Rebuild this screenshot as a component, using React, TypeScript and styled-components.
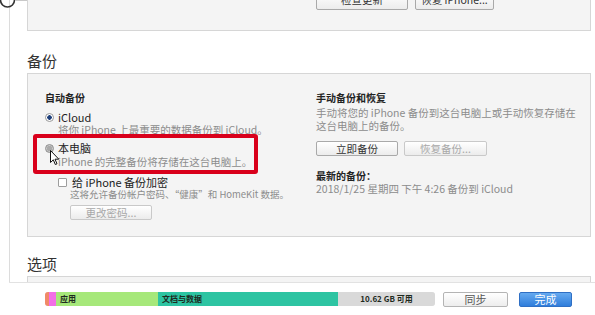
import React from "react";
import styled, { createGlobalStyle } from "styled-components";

const GlobalStyle = createGlobalStyle`
  html, body {
    margin: 0;
    padding: 0;
    background: #fff;
  }
  body {
    font-family: "Noto Sans CJK SC", "Noto Sans", sans-serif;
    color: #222;
  }
`;

const Screen = styled.div`
  position: relative;
  width: 595px;
  height: 315px;
  display: flex;
  flex-direction: column;
  overflow: hidden;
  background: #fff;
`;

const Scroll = styled.div`
  flex: 1;
  min-height: 0;
  overflow: hidden;
  margin-left: 9px;
  border-left: 1px solid #dcdcdc;
  padding: 0 4px 0 17px;
`;

const Panel = styled.div<{ $height: number }>`
  position: relative;
  box-sizing: border-box;
  height: ${(p) => p.$height}px;
  background: #f4f4f4;
  border: 1px solid #d6d6d6;
  padding: 0 0 0 17px;
  display: grid;
  grid-template-columns: 271px 1fr;
`;

const TopPanel = styled(Panel)`
  margin-top: -20px;
  align-items: end;
  padding-bottom: 20px;
`;

const Column = styled.div`
  display: flex;
  flex-direction: column;
  align-items: flex-start;
  padding-top: 17px;
`;

const ButtonRow = styled.div<{ $gap?: number }>`
  display: flex;
  gap: ${(p) => p.$gap ?? 6}px;
`;

const Button = styled.div<{ $width: number; $disabled?: boolean; $height?: number }>`
  box-sizing: border-box;
  width: ${(p) => p.$width}px;
  height: ${(p) => p.$height ?? 15}px;
  border: 1px solid ${(p) => (p.$disabled ? "#c9c9c9" : "#a9a9a9")};
  border-radius: 2px;
  background: linear-gradient(#ffffff, #ececec);
  color: ${(p) => (p.$disabled ? "#a8a8a8" : "#333")};
  font-size: 10.5px;
  line-height: 13px;
  text-align: center;
  white-space: nowrap;
`;

const SectionTitle = styled.div<{ $top: number }>`
  margin-top: ${(p) => p.$top}px;
  margin-bottom: 2px;
  font-size: 15px;
  line-height: 20px;
  color: #333;
`;

const GroupTitle = styled.div<{ $top?: number }>`
  margin-top: ${(p) => p.$top ?? 0}px;
  font-size: 10px;
  font-weight: 700;
  line-height: 14px;
  color: #222;
`;

const OptionRow = styled.div<{ $top?: number; $indent?: number }>`
  display: flex;
  align-items: center;
  gap: 4px;
  margin-top: ${(p) => p.$top ?? 0}px;
  margin-left: ${(p) => p.$indent ?? 0}px;
  font-size: 11px;
  line-height: 14px;
  color: #222;
`;

const Radio = styled.span<{ $checked?: boolean; $hover?: boolean }>`
  box-sizing: border-box;
  width: 9px;
  height: 9px;
  border-radius: 50%;
  border: 1px solid ${(p) => (p.$hover ? "#8d8d8d" : "#9a9a9a")};
  background: ${(p) =>
    p.$checked
      ? "radial-gradient(circle, #1d3f7a 0 2px, #ffffff 2.5px)"
      : p.$hover
      ? "radial-gradient(circle, #a9a9a9 0 2.5px, #c9c9c9 3px)"
      : "#fff"};
`;

const Checkbox = styled.span`
  box-sizing: border-box;
  width: 9px;
  height: 9px;
  border: 1px solid #9d9d9d;
  border-radius: 1px;
  background: #fff;
  margin-right: 1px;
`;

const Desc = styled.div<{ $top?: number; $indent?: number; $size?: number; $lh?: number }>`
  margin-top: ${(p) => p.$top ?? 0}px;
  margin-left: ${(p) => p.$indent ?? 0}px;
  font-size: ${(p) => p.$size ?? 10.5}px;
  line-height: ${(p) => p.$lh ?? 12}px;
  color: #8c8c8c;
  white-space: nowrap;
`;

const Highlight = styled.div`
  position: absolute;
  left: 5px;
  top: 60px;
  width: 225px;
  height: 40px;
  box-sizing: border-box;
  border: 4px solid #d9001b;
  border-radius: 3px;
  pointer-events: none;
`;

const Cursor = styled.svg`
  position: absolute;
  left: 22px;
  top: 76px;
`;

const SidebarIcon = styled.svg`
  position: absolute;
  left: 0;
  top: 0;
`;

const Footer = styled.div`
  height: 33px;
  box-sizing: border-box;
  margin-left: 9px;
  border-top: 1px solid #e2e2e2;
  background: #fff;
  display: flex;
  align-items: center;
  padding-left: 36px;
`;

const StorageBar = styled.div`
  display: flex;
  width: 390px;
  height: 14px;
  border-radius: 3px;
  overflow: hidden;
  box-shadow: inset 0 0 0 1px rgba(0, 0, 0, 0.08);
`;

const Segment = styled.div<{ $width: number; $color: string; $center?: boolean }>`
  width: ${(p) => p.$width}px;
  flex: ${(p) => (p.$width ? "none" : "1")};
  background: ${(p) => p.$color};
  font-size: 8px;
  font-weight: 700;
  line-height: 14px;
  color: #1e2a1e;
  padding-left: ${(p) => (p.$center ? 0 : 4)}px;
  text-align: ${(p) => (p.$center ? "center" : "left")};
  box-sizing: border-box;
  white-space: nowrap;
`;

const FooterButton = styled.div<{ $width: number; $primary?: boolean; $left: number }>`
  box-sizing: border-box;
  width: ${(p) => p.$width}px;
  height: 15px;
  margin-left: ${(p) => p.$left}px;
  border-radius: 2px;
  border: 1px solid ${(p) => (p.$primary ? "#2f6fc4" : "#b4b4b4")};
  background: ${(p) =>
    p.$primary ? "linear-gradient(#66aaf0, #2f7ddb)" : "linear-gradient(#ffffff, #ededed)"};
  color: ${(p) => (p.$primary ? "#fff" : "#555")};
  font-size: 11px;
  line-height: 13px;
  text-align: center;
`;

export default function App() {
  return (
    <>
      <GlobalStyle />
      <Screen>
        <SidebarIcon width="50" height="8" viewBox="0 0 50 8">
          <path d="M0.5 0 A7 7 0 0 0 14.5 0" fill="none" stroke="#333" strokeWidth="1.6" />
          <line x1="15" y1="0.5" x2="44" y2="0.5" stroke="#c8c8c8" strokeWidth="1" />
        </SidebarIcon>
        <Scroll>
          <TopPanel $height={51}>
            <div />
            <ButtonRow $gap={7}>
              <Button $width={92} $height={18}>检查更新</Button>
              <Button $width={79} $height={18}>恢复 iPhone...</Button>
            </ButtonRow>
          </TopPanel>

          <SectionTitle $top={20}>备份</SectionTitle>
          <Panel $height={164}>
            <Column>
              <GroupTitle>自动备份</GroupTitle>
              <OptionRow $top={5}>
                <Radio $checked />
                iCloud
              </OptionRow>
              <Desc $indent={13}>将你 iPhone 上最重要的数据备份到 iCloud。</Desc>
              <OptionRow $top={5}>
                <Radio $hover />
                本电脑
              </OptionRow>
              <Desc $indent={13} $lh={14}>iPhone 的完整备份将存储在这台电脑上。</Desc>
              <OptionRow $top={6} $indent={13}>
                <Checkbox />
                给 iPhone 备份加密
              </OptionRow>
              <Desc $indent={25} $size={9.5} $lh={11}>
                这将允许备份帐户密码、“健康”和 HomeKit 数据。
              </Desc>
              <ButtonRow style={{ marginLeft: 25, marginTop: 5 }}>
                <Button $width={82} $disabled>更改密码...</Button>
              </ButtonRow>
            </Column>
            <Column>
              <GroupTitle>手动备份和恢复</GroupTitle>
              <Desc $top={1} $lh={13}>
                手动将您的 iPhone 备份到这台电脑上或手动恢复存储在
                <br />
                这台电脑上的备份。
              </Desc>
              <ButtonRow style={{ marginTop: 9 }}>
                <Button $width={82}>立即备份</Button>
                <Button $width={83} $disabled>恢复备份...</Button>
              </ButtonRow>
              <GroupTitle $top={13}>最新的备份：</GroupTitle>
              <Desc>2018/1/25 星期四 下午 4:26 备份到 iCloud</Desc>
            </Column>
            <Highlight />
            <Cursor width="10" height="16" viewBox="0 0 10 16">
              <path
                d="M0.5 0.5 L0.5 12.5 L3.3 9.8 L5.3 14.5 L7 13.8 L5 9.2 L8.8 9.2 Z"
                fill="#fff"
                stroke="#111"
                strokeWidth="1"
                strokeLinejoin="round"
              />
            </Cursor>
          </Panel>

          <SectionTitle $top={17}>选项</SectionTitle>
          <Panel $height={40} />
        </Scroll>
        <Footer>
          <StorageBar>
            <Segment $width={4} $color="#f08a68" />
            <Segment $width={7} $color="#f26fe6" />
            <Segment $width={102} $color="#a6e87a">应用</Segment>
            <Segment $width={180} $color="#2dc4a2">文档与数据</Segment>
            <Segment $width={0} $color="#d9d9d9" $center>10.62 GB 可用</Segment>
          </StorageBar>
          <FooterButton $width={65} $left={8}>同步</FooterButton>
          <FooterButton $width={53} $left={11} $primary>完成</FooterButton>
        </Footer>
      </Screen>
    </>
  );
}
